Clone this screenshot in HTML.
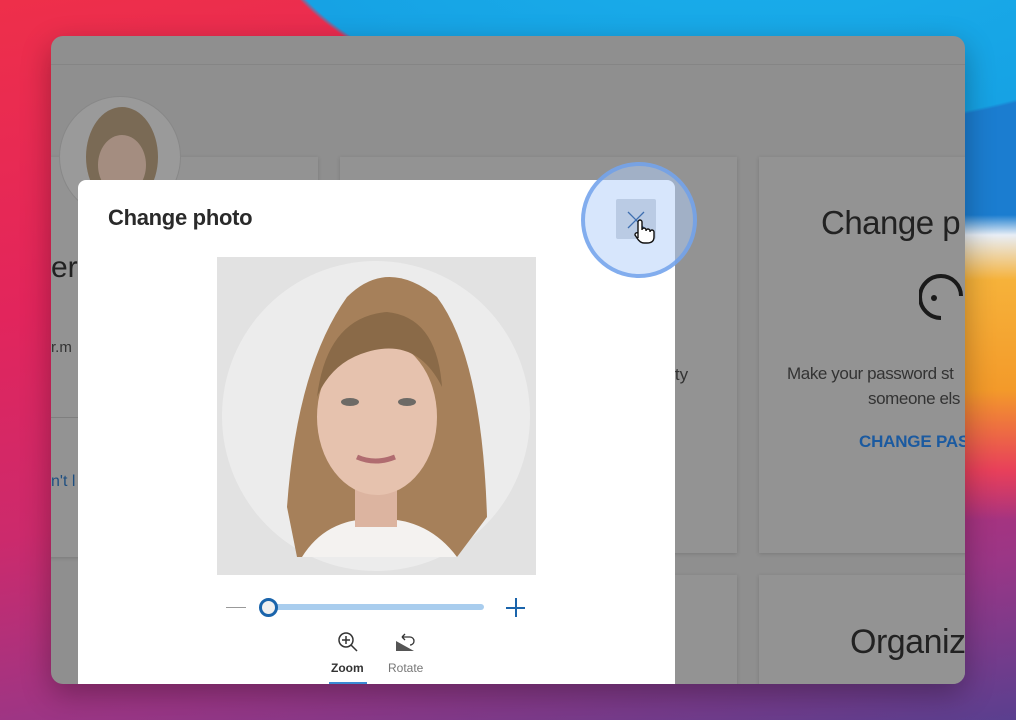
<!DOCTYPE html>
<html><head><meta charset="utf-8"><style>
*{margin:0;padding:0;box-sizing:border-box}
body{width:1016px;height:720px;overflow:hidden;position:relative;font-family:"Liberation Sans","DejaVu Sans",sans-serif;
background:linear-gradient(170deg,#ee2f4a 0%,#e2255c 35%,#cc2a6c 60%,#9a3686 82%,#5a3f8f 100%);}
.bg2{position:absolute;inset:0;background:
radial-gradient(ellipse 700px 300px at 760px -80px,#1ab0ec 0%,#16a2e4 70%,transparent 71%),
linear-gradient(180deg,#1b7dd0 0px,#1b7dd0 215px,#e8eef6 235px,#f6b23a 280px,#f39a2a 390px,#e8405a 470px,transparent 520px) 965px 0/51px 720px no-repeat;}
.win{position:absolute;left:51px;top:36px;width:914px;height:648px;border-radius:12px;background:#8f8f8f;overflow:hidden;box-shadow:0 10px 30px rgba(0,0,0,.3)}
.hdr{position:absolute;left:0;top:28px;width:100%;height:1px;background:#858585}
.card{position:absolute;background:#939393;box-shadow:0 1px 4px rgba(0,0,0,.15)}
.t{position:absolute;color:#222;white-space:nowrap}
.dlg{position:absolute;left:27px;top:144px;width:597px;height:520px;background:#fff;border-radius:8px 8px 0 0}
</style></head><body>
<div class="bg2"></div>
<div class="win">
<div class="hdr"></div>
<div class="card" style="left:-10px;top:121px;width:277px;height:400px"></div>
<div class="card" style="left:289px;top:121px;width:397px;height:396px"></div>
<div class="card" style="left:708px;top:121px;width:220px;height:396px"></div>
<div class="card" style="left:289px;top:539px;width:397px;height:120px"></div>
<div class="card" style="left:708px;top:539px;width:220px;height:120px"></div>
<div style="position:absolute;left:8px;top:60px;width:122px;height:122px;border-radius:50%;background:#9a9a9a;border:1px solid #888;overflow:hidden">
<svg width="122" height="122"><ellipse cx="62" cy="60" rx="36" ry="50" fill="#7a6a55"/><ellipse cx="62" cy="68" rx="24" ry="30" fill="#a48d80"/></svg></div>
<div class="t" style="left:0;top:215px;font-size:30px">er-</div>
<div class="t" style="left:0;top:303px;font-size:15px;color:#333">r.m</div>
<div style="position:absolute;left:0;top:381px;width:270px;height:1px;background:#7f7f7f"></div>
<div class="t" style="left:0;top:437px;font-size:16px;color:#1f4f80">n't l</div>
<div class="t" style="left:605px;top:329px;font-size:17px;color:#333">urity</div>
<div class="t" style="left:770px;top:168px;font-size:33px;letter-spacing:-.5px">Change p</div>
<svg style="position:absolute;left:868px;top:236px" width="50" height="60"><path d="M22 4a20 20 0 1 0 0 42" stroke="#1a1a1a" stroke-width="4" fill="none"/><circle cx="15" cy="26" r="3" fill="#1a1a1a"/><path d="M22 4a20 20 0 0 1 20 20" stroke="#1a1a1a" stroke-width="4" fill="none"/></svg>
<div class="t" style="left:736px;top:328px;font-size:17px;color:#333;letter-spacing:-.4px">Make your password st</div>
<div class="t" style="left:817px;top:353px;font-size:17px;color:#333;letter-spacing:-.4px">someone els</div>
<div class="t" style="left:808px;top:396px;font-size:17px;color:#1b5aa0;font-weight:bold;letter-spacing:-.2px">CHANGE PAS</div>
<div class="t" style="left:799px;top:587px;font-size:34px;letter-spacing:-.5px">Organiz</div>
<div class="dlg">
<div class="t" style="left:30px;top:25px;font-size:22px;color:#2a2a2a;font-weight:bold;letter-spacing:-.3px">Change photo</div>
<div style="position:absolute;left:139px;top:77px;width:319px;height:318px;background:#e2e2e2;overflow:hidden">
<svg width="319" height="318">
<ellipse cx="159" cy="159" rx="154" ry="155" fill="#ececec"/>
<path d="M70 250 Q80 110 130 40 Q170 0 220 40 Q265 100 270 260 L240 300 L80 300Z" fill="#a6805a"/>
<path d="M85 300 Q110 260 160 262 Q210 260 240 300Z" fill="#f4f2f0"/>
<rect x="138" y="220" width="42" height="50" fill="#dcb4a0"/>
<ellipse cx="160" cy="160" rx="60" ry="78" fill="#e6c2ae"/>
<path d="M100 140 Q110 60 170 55 Q220 60 225 130 Q200 80 150 95 Q115 105 100 140Z" fill="#8a6a48"/>
<ellipse cx="133" cy="145" rx="9" ry="4" fill="#6d6a66"/><ellipse cx="190" cy="145" rx="9" ry="4" fill="#6d6a66"/>
<path d="M140 200 Q158 208 178 200" stroke="#b06c70" stroke-width="5" fill="none"/>
</svg></div>
<div style="position:absolute;left:148px;top:427px;width:20px;height:1px;background:#999"></div>
<div style="position:absolute;left:190px;top:424px;width:216px;height:6px;border-radius:3px;background:#a9cdee"></div>
<div style="position:absolute;left:181px;top:418px;width:19px;height:19px;border-radius:50%;background:#f0f0f0;border:3px solid #1a64ab"></div>
<div style="position:absolute;left:428px;top:427px;width:19px;height:1.5px;background:#1a64ab"></div>
<div style="position:absolute;left:437px;top:418px;width:1.5px;height:19px;background:#1a64ab"></div>
<svg style="position:absolute;left:259px;top:451px" width="22" height="22"><circle cx="9" cy="9" r="7" stroke="#333" stroke-width="1.5" fill="none"/><path d="M14 14l6 6M9 5v8M5 9h8" stroke="#333" stroke-width="1.5"/></svg>
<svg style="position:absolute;left:316px;top:451px" width="22" height="22"><path d="M2 20h18l-18-10z" fill="#555"/><path d="M8 6h8a4 4 0 0 1 0 8M8 6l3-3M8 6l3 3" stroke="#333" stroke-width="1.3" fill="none"/></svg>
<div class="t" style="left:253px;top:481px;font-size:12px;font-weight:bold;color:#333">Zoom</div>
<div class="t" style="left:310px;top:481px;font-size:12px;color:#777">Rotate</div>
<div style="position:absolute;left:251px;top:502px;width:38px;height:2px;background:#3a8ad4"></div>
</div>
</div>
<div style="position:absolute;left:581px;top:162px;width:116px;height:116px;border-radius:50%;background:rgba(175,205,250,.5);border:4px solid rgba(110,160,235,.8)"></div>
<div style="position:absolute;left:616px;top:199px;width:40px;height:40px;background:rgba(150,170,200,.45);border-radius:2px"></div>
<svg style="position:absolute;left:626px;top:210px" width="30" height="34"><path d="M2 2l16 16M18 2L2 18" stroke="#3f6fb0" stroke-width="1.3"/><path d="M12 28V12a2 2 0 0 1 4 0v8a2 2 0 0 1 4 0v1a2 2 0 0 1 4 0v1a2 2 0 0 1 4 0v5q0 6-7 6h-3q-4 0-7-5l-2-3a2 2 0 0 1 3-2z" fill="#fff" stroke="#111" stroke-width="1.4"/></svg>
</body></html>
